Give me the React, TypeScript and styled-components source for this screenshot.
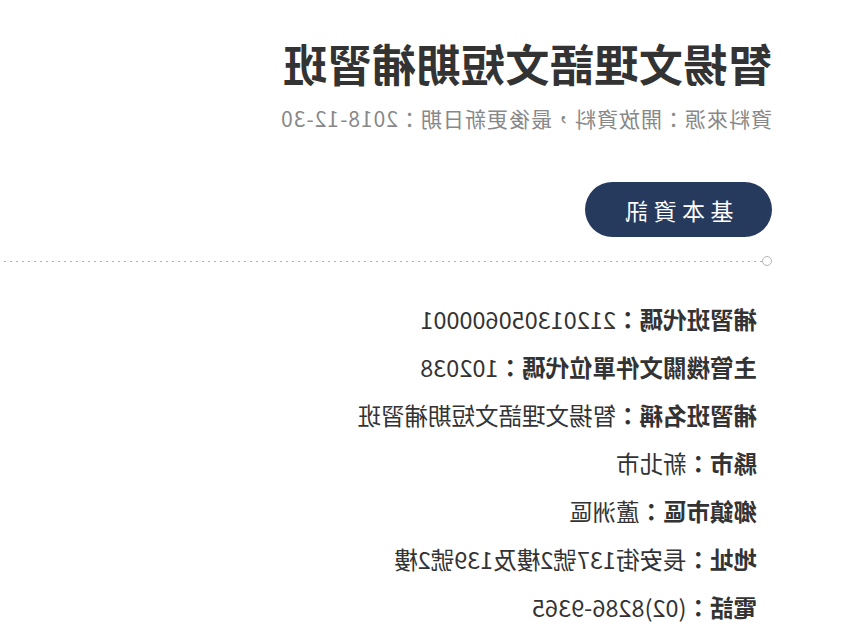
import React from "react";
import styled, { createGlobalStyle } from "styled-components";

const Global = createGlobalStyle`
  html, body { margin: 0; padding: 0; background: #fff; }
  body { font-family: "Noto Sans CJK TC", "Noto Sans", sans-serif; color: #333; }
`;

const Page = styled.div`
  width: 844px;
  height: 635px;
  overflow: hidden;
  transform: scaleX(-1);
  background: #fff;
`;

const Header = styled.header`
  padding: 33px 0 0 72px;
`;

const Title = styled.h1`
  margin: 0;
  font-size: 44px;
  line-height: 60px;
  font-weight: 700;
  color: #333;
  letter-spacing: 0.5px;
`;

const Source = styled.p`
  margin: 11px 0 0;
  font-size: 21px;
  line-height: 28px;
  color: #888;
  letter-spacing: 1px;
`;

const Tab = styled.div`
  margin: 50px 0 0 72px;
  width: 187px;
  height: 55px;
  border-radius: 28px;
  background: #263a5e;
  color: #fff;
  font-size: 23px;
  letter-spacing: 5.5px;
  display: flex;
  align-items: center;
  justify-content: center;
  padding-left: 4px;
  box-sizing: border-box;
`;

const Divider = styled.div`
  margin: 19px 0 0 72px;
  display: flex;
  align-items: center;
`;

const Knob = styled.span`
  width: 8px;
  height: 8px;
  border: 1.5px solid #b5b5b5;
  border-radius: 50%;
  flex: none;
`;

const Dots = styled.span`
  flex: 1;
  height: 1px;
  background-image: repeating-linear-gradient(
    to right,
    #b0b0b0 0 2px,
    transparent 2px 6px
  );
`;

const List = styled.ul`
  list-style: none;
  margin: 29px 0 0;
  padding: 0 0 0 87px;
`;

const Item = styled.li`
  font-size: 23.5px;
  line-height: 48px;
  color: #333;
`;

const Label = styled.b`
  font-weight: 700;
`;

const rows: [string, string][] = [
  ["補習班代碼", "212013050600001"],
  ["主管機關文件單位代碼", "102038"],
  ["補習班名稱", "智揚文理語文短期補習班"],
  ["縣市", "新北市"],
  ["鄉鎮市區", "蘆洲區"],
  ["地址", "長安街137號2樓及139號2樓"],
  ["電話", "(02)8286-9365"],
];

export default function App() {
  return (
    <>
      <Global />
      <Page>
        <Header>
          <Title>智揚文理語文短期補習班</Title>
          <Source>資料來源：開放資料，最後更新日期：2018-12-30</Source>
        </Header>
        <Tab>基本資訊</Tab>
        <Divider>
          <Knob />
          <Dots />
        </Divider>
        <List>
          {rows.map(([k, v]) => (
            <Item key={k}>
              <Label>{k}：</Label>
              {v}
            </Item>
          ))}
        </List>
      </Page>
    </>
  );
}
